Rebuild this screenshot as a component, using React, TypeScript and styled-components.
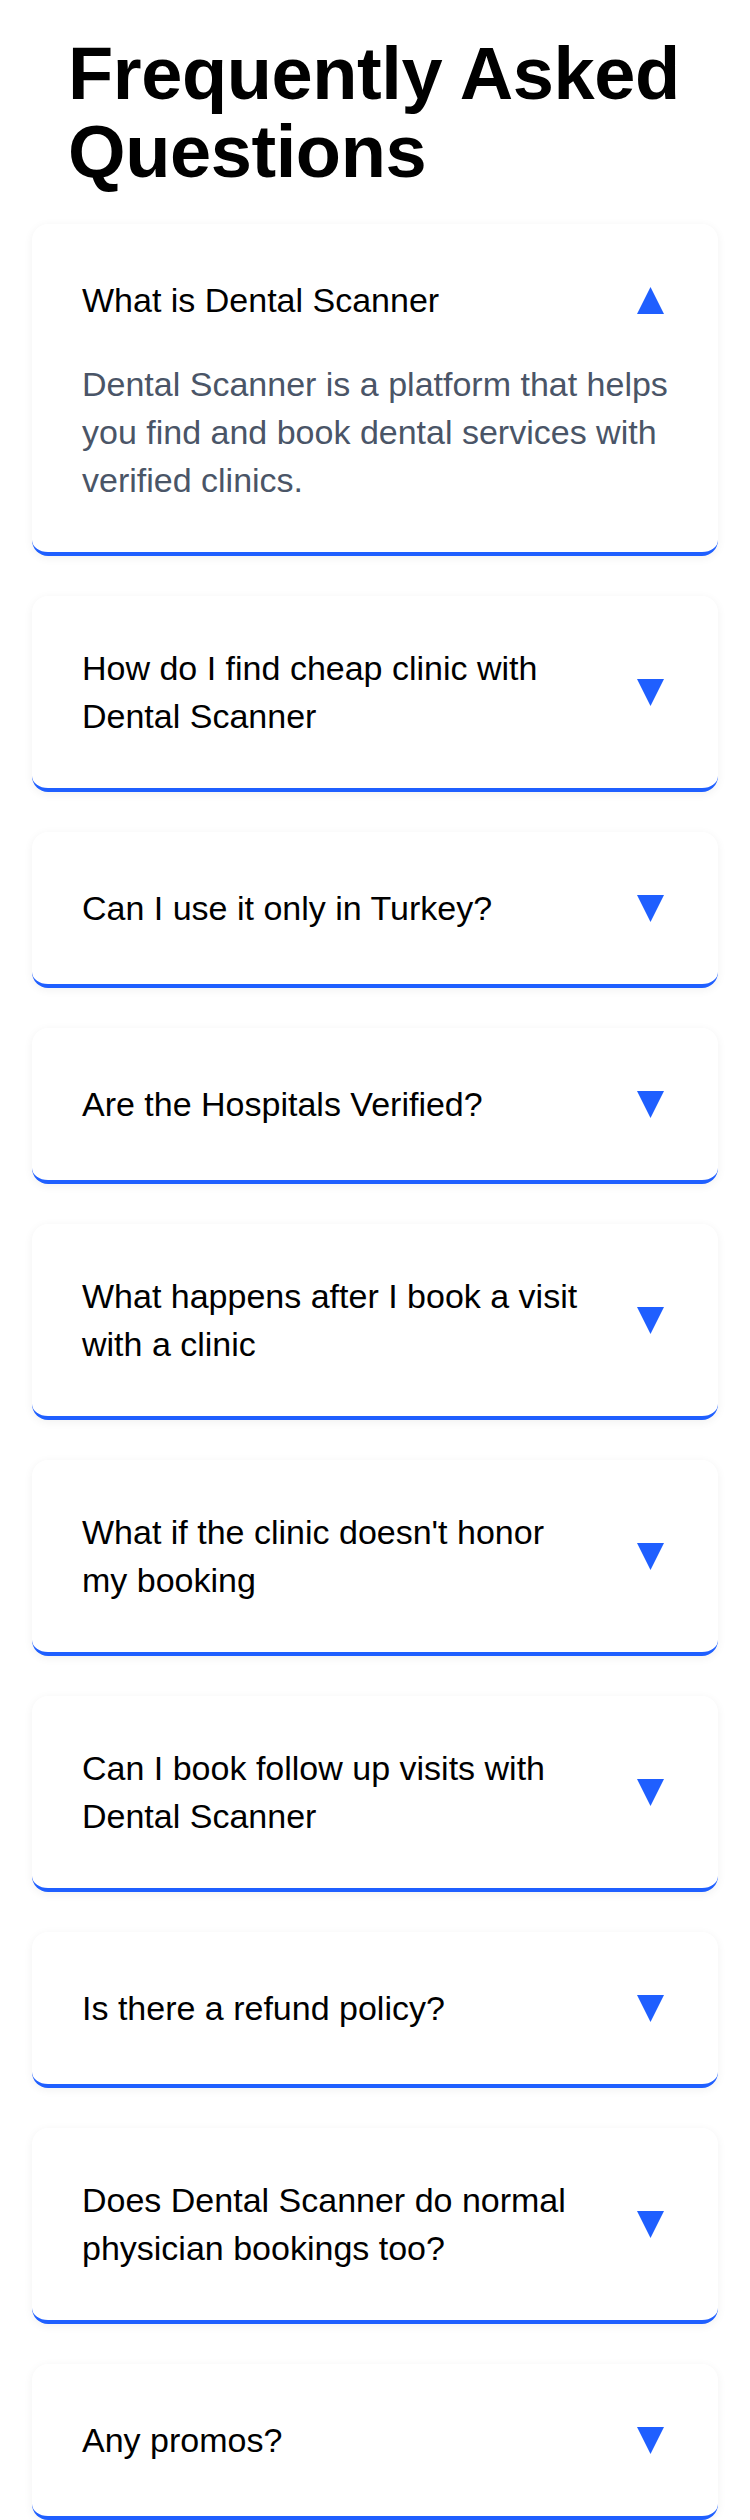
import { useState } from 'react';
import styled, { createGlobalStyle } from 'styled-components';

const faqs = [
  {
    question: 'What is Dental Scanner',
    answer:
      'Dental Scanner is a platform that helps you find and book dental services with verified clinics.',
  },
  { question: 'How do I find cheap clinic with Dental Scanner', answer: '' },
  { question: 'Can I use it only in Turkey?', answer: '' },
  { question: 'Are the Hospitals Verified?', answer: '' },
  { question: 'What happens after I book a visit with a clinic', answer: '' },
  { question: "What if the clinic doesn't honor my booking", answer: '' },
  { question: 'Can I book follow up visits with Dental Scanner', answer: '' },
  { question: 'Is there a refund policy?', answer: '' },
  { question: 'Does Dental Scanner do normal physician bookings too?', answer: '' },
  { question: 'Any promos?', answer: '' },
];

export default function App() {
  const [openIndex, setOpenIndex] = useState<number | null>(0);

  const toggle = (index: number) => {
    setOpenIndex(openIndex === index ? null : index);
  };

  return (
    <>
      <GlobalStyle />
      <PageBlock>
        <Title>Frequently Asked Questions</Title>
        <FaqList>
          {faqs.map((faq, index) => {
            const isOpen = openIndex === index;
            return (
              <FaqCard key={faq.question}>
                <QuestionRow onClick={() => toggle(index)}>
                  <QuestionText>{faq.question}</QuestionText>
                  <ToggleButton aria-label={isOpen ? 'Collapse' : 'Expand'}>
                    <Arrow $open={isOpen} width="27" height="27" viewBox="0 0 27 27">
                      <polygon points="0,0 27,0 13.5,27" />
                    </Arrow>
                  </ToggleButton>
                </QuestionRow>
                {isOpen && faq.answer && <AnswerText>{faq.answer}</AnswerText>}
              </FaqCard>
            );
          })}
        </FaqList>
      </PageBlock>
    </>
  );
}

const GlobalStyle = createGlobalStyle`
  * {
    box-sizing: border-box;
  }

  body {
    margin: 0;
    background: #ffffff;
    font-family: 'Liberation Sans', Arial, sans-serif;
    color: #000000;
  }
`;

const PageBlock = styled.main`
  padding: 35px 32px 0;
`;

const Title = styled.h1`
  margin: 0 0 33px;
  padding-left: 36px;
  font-size: 74px;
  line-height: 78px;
  font-weight: 700;
  letter-spacing: -0.4px;
  color: #000000;
`;

const FaqList = styled.div`
  display: flex;
  flex-direction: column;
  gap: 40px;
`;

const FaqCard = styled.section`
  padding: 48px 40px 48px 50px;
  background: #ffffff;
  border-radius: 16px;
  border-bottom: 4px solid #1f5fff;
  box-shadow: 0 2px 10px rgba(0, 0, 0, 0.06);
`;

const QuestionRow = styled.div`
  display: flex;
  align-items: center;
  gap: 32px;
  min-height: 56px;
  cursor: pointer;
`;

const QuestionText = styled.h3`
  flex: 1;
  margin: 0;
  font-size: 34px;
  line-height: 48px;
  font-weight: 400;
  color: #000000;
`;

const ToggleButton = styled.button`
  display: flex;
  align-items: center;
  justify-content: center;
  flex-shrink: 0;
  width: 56px;
  height: 56px;
  padding: 0;
  border: none;
  background: transparent;
  cursor: pointer;
`;

const Arrow = styled.svg<{ $open: boolean }>`
  fill: #1f5fff;
  transform: ${({ $open }) => ($open ? 'rotate(180deg)' : 'none')};
`;

const AnswerText = styled.p`
  margin: 32px 0 0;
  font-size: 34px;
  line-height: 48px;
  color: #4a5567;
`;
